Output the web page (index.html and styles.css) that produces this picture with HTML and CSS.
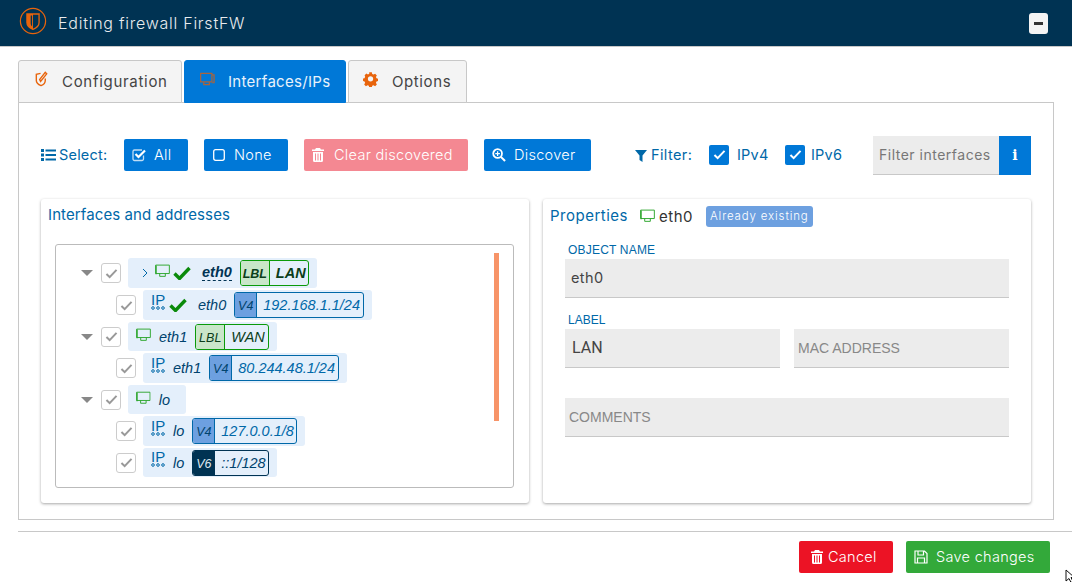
FILE: index.html
```html
<!DOCTYPE html>
<html lang="en">
<head>
  <meta charset="UTF-8">
  <title>Editing firewall FirstFW</title>
  <link rel="stylesheet" href="styles.css">
</head>
<body>
  <svg class="defs" width="0" height="0">
    <symbol id="i-check" viewBox="0 0 18 14"><path d="M1.500 7.500 6.500 12.500 16.500 2" fill="none" stroke="currentColor" stroke-width="3.400"/></symbol>
    <symbol id="i-monitor" viewBox="0 0 16 14"><path d="M.7.7h14.600v9H.7z M5 9.700v3h6v-3" fill="none" stroke="currentColor" stroke-width="1"/><path d="M.5 1v9.500h1.300V1z" fill="currentColor"/></symbol>
    <symbol id="i-trash" viewBox="0 0 12 14"><path d="M4 0h4l1 1.500h3v1.500H0V1.500h3zM1 4h10v8.500a1.500 1.500 0 0 1-1.500 1.500h-7A1.500 1.500 0 0 1 1 12.500zm2 1.500v7h1v-7zm2.500 0v7h1v-7zm2.500 0v7h1v-7z" fill="currentColor" fill-rule="evenodd"/></symbol>
    <symbol id="i-tick" viewBox="0 0 14 12"><path d="M1.500 6.500 5 10 12.500 2" fill="none" stroke="currentColor" stroke-width="2.200"/></symbol>
  </svg>

  <header class="title-bar">
    <svg class="logo" viewBox="0 0 30 30">
      <circle cx="15" cy="15" r="13.500" fill="none" stroke="#e8640c" stroke-width="1.300"/>
      <path d="M8.500 7.500h13v9c0 3.500-3 6-6.500 7.500-3.500-1.500-6.500-4-6.500-7.500z" fill="none" stroke="#e8640c" stroke-width="1.400"/>
      <path d="M8.500 7.500h6.500v16.500c-3.500-1.500-6.500-4-6.500-7.500z" fill="#e8640c"/>
      <path d="M12.500 9h1.500v12c-1-.8-1.500-2-1.500-4z" fill="#003353"/>
    </svg>
    <h1>Editing firewall FirstFW</h1>
    <button class="min-btn"><span></span></button>
  </header>

  <main class="content">
    <nav class="tabs">
      <a class="tab tab-conf">
        <svg class="tab-icon" viewBox="0 0 14 17"><path d="M11 8v2c0 2.500-2 4.500-4.500 5.500C4 14.500 1.500 12.500 1.500 10V3.500L6 2.500M5 9l1 2 6.500-8-1.500-1.500z" fill="none" stroke="#e8640c" stroke-width="1.500"/></svg>
        Configuration
      </a>
      <a class="tab tab-active">
        <svg class="tab-icon" viewBox="0 0 16 15"><path d="M.7 1.500h12v9H.7zM13 3h2v8.500h-2M4 11v2.500h6V11" fill="none" stroke="#a8643c" stroke-width="1.300"/></svg>
        Interfaces/IPs
      </a>
      <a class="tab tab-opts">
        <svg class="tab-icon" viewBox="0 0 16 16"><path d="M6.500.500h3l.4 2 1.500.7 1.800-1.100 2 2-1.100 1.800.7 1.500 1.700.4v2.800l-1.700.4-.7 1.500 1.100 1.800-2 2-1.800-1.100-1.500.7-.4 1.700h-3l-.4-1.700-1.500-.7-1.800 1.100-2-2 1.100-1.800-.7-1.500-1.700-.4V7.600l1.700-.4.700-1.500L1.300 3.900l2-2 1.800 1.100 1.500-.7zM8 5a3 3 0 1 0 0 6 3 3 0 0 0 0-6z" fill="#e8640c" fill-rule="evenodd" transform="translate(.5 .3) scale(.94)"/></svg>
        Options
      </a>
    </nav>

    <section class="panel">
      <div class="toolbar">
        <span class="tool-label label-select">
          <svg class="list-icon" viewBox="0 0 15 12"><path d="M0 0h3v3H0zM4.500.500H15v2H4.500zM0 4.500h3v3H0zM4.500 5H15v2H4.500zM0 9h3v3H0zM4.500 9.500H15v2H4.500z" fill="currentColor"/></svg>
          Select:
        </span>
        <button class="btn btn-blue btn-all">
          <svg class="btn-icon" viewBox="0 0 14 14"><path d="M11.500 7.500v3.500a1.500 1.500 0 0 1-1.500 1.500H2.500A1.500 1.500 0 0 1 1 11V3.500A1.500 1.500 0 0 1 2.500 2h7.500" fill="none" stroke="#fff" stroke-width="1.300" opacity=".75"/><path d="M3.500 6 6.500 9 13 2.500" fill="none" stroke="#fff" stroke-width="2.200"/></svg>
          All
        </button>
        <button class="btn btn-blue btn-none">
          <svg class="btn-icon" viewBox="0 0 14 14"><rect x="1.700" y="1.700" width="10.600" height="10.600" rx="2" fill="none" stroke="#fff" stroke-width="1.300"/></svg>
          None
        </button>
        <button class="btn btn-clear">
          <svg class="btn-icon trash-small"><use href="#i-trash"/></svg>
          Clear discovered
        </button>
        <button class="btn btn-blue btn-discover">
          <svg class="btn-icon" viewBox="0 0 15 15"><circle cx="6" cy="6" r="4.700" fill="none" stroke="#fff" stroke-width="1.900"/><path d="M9.500 9.500 14 14" stroke="#fff" stroke-width="2.200"/><path d="M3.500 6h5M6 3.500v5" stroke="#fff" stroke-width="1.300"/></svg>
          Discover
        </button>
        <span class="tool-label label-filter">
          <svg class="filter-icon" viewBox="0 0 12 12"><path d="M0 0h12L7.500 5.500V12L4.500 10V5.500z" fill="currentColor"/></svg>
          Filter:
        </span>
        <label class="check-wrap check-v4"><span class="check-box"><svg class="check-tick"><use href="#i-tick"/></svg></span>IPv4</label>
        <label class="check-wrap check-v6"><span class="check-box"><svg class="check-tick"><use href="#i-tick"/></svg></span>IPv6</label>
        <div class="filter-input">
          <span class="filter-text">Filter interfaces</span>
          <span class="filter-info">i</span>
        </div>
      </div>

      <div class="cards">
        <section class="card">
          <h2 class="card-title">Interfaces and addresses</h2>
          <div class="tree">
            <div class="tree-row row-h30">
              <span class="caret"></span><span class="tree-check"><svg class="tree-tick"><use href="#i-tick"/></svg></span>
              <div class="pill pill-eth0">
                <svg class="chev" viewBox="0 0 6 10"><path d="M1 1l4 4-4 4" fill="none" stroke="#0068a8" stroke-width="1"/></svg>
                <svg class="monitor mon-tight"><use href="#i-monitor"/></svg>
                <svg class="ok-tick"><use href="#i-check"/></svg>
                <span class="name name-sel">eth0</span>
                <span class="tag tag-green tag-bold"><span class="tag-key">LBL</span><span class="tag-val">LAN</span></span>
              </div>
            </div>
            <div class="tree-row row-child row-h30">
              <span class="tree-check"><svg class="tree-tick"><use href="#i-tick"/></svg></span>
              <div class="pill pill-ip">
                <span class="ip-icon"><span class="ip-text">IP</span><svg class="ip-dots" viewBox="0 0 14 4"><circle cx="2" cy="2" r="1.300"/><circle cx="7" cy="2" r="1.300"/><circle cx="12" cy="2" r="1.300"/></svg></span>
                <svg class="ok-tick ok-ip"><use href="#i-check"/></svg>
                <span class="name">eth0</span>
                <span class="tag tag-blue"><span class="tag-key">V4</span><span class="tag-val">192.168.1.1/24</span></span>
              </div>
            </div>
            <div class="tree-row row-h29">
              <span class="caret"></span><span class="tree-check"><svg class="tree-tick"><use href="#i-tick"/></svg></span>
              <div class="pill pill-if">
                <svg class="monitor"><use href="#i-monitor"/></svg>
                <span class="name">eth1</span>
                <span class="tag tag-green"><span class="tag-key">LBL</span><span class="tag-val">WAN</span></span>
              </div>
            </div>
            <div class="tree-row row-child row-h30">
              <span class="tree-check"><svg class="tree-tick"><use href="#i-tick"/></svg></span>
              <div class="pill pill-ip">
                <span class="ip-icon"><span class="ip-text">IP</span><svg class="ip-dots" viewBox="0 0 14 4"><circle cx="2" cy="2" r="1.300"/><circle cx="7" cy="2" r="1.300"/><circle cx="12" cy="2" r="1.300"/></svg></span>
                <span class="name">eth1</span>
                <span class="tag tag-blue"><span class="tag-key">V4</span><span class="tag-val">80.244.48.1/24</span></span>
              </div>
            </div>
            <div class="tree-row row-h29">
              <span class="caret"></span><span class="tree-check"><svg class="tree-tick"><use href="#i-tick"/></svg></span>
              <div class="pill pill-if pill-lo">
                <svg class="monitor"><use href="#i-monitor"/></svg>
                <span class="name">lo</span>
              </div>
            </div>
            <div class="tree-row row-child row-h30">
              <span class="tree-check"><svg class="tree-tick"><use href="#i-tick"/></svg></span>
              <div class="pill pill-ip">
                <span class="ip-icon"><span class="ip-text">IP</span><svg class="ip-dots" viewBox="0 0 14 4"><circle cx="2" cy="2" r="1.300"/><circle cx="7" cy="2" r="1.300"/><circle cx="12" cy="2" r="1.300"/></svg></span>
                <span class="name">lo</span>
                <span class="tag tag-blue"><span class="tag-key">V4</span><span class="tag-val">127.0.0.1/8</span></span>
              </div>
            </div>
            <div class="tree-row row-child row-h29">
              <span class="tree-check"><svg class="tree-tick"><use href="#i-tick"/></svg></span>
              <div class="pill pill-ip">
                <span class="ip-icon"><span class="ip-text">IP</span><svg class="ip-dots" viewBox="0 0 14 4"><circle cx="2" cy="2" r="1.300"/><circle cx="7" cy="2" r="1.300"/><circle cx="12" cy="2" r="1.300"/></svg></span>
                <span class="name">lo</span>
                <span class="tag tag-dark"><span class="tag-key">V6</span><span class="tag-val">::1/128</span></span>
              </div>
            </div>
            <div class="tree-scroll"></div>
          </div>
        </section>

        <section class="card card-props">
          <div class="props-head">
            <h2 class="card-title">Properties</h2>
            <svg class="monitor props-mon"><use href="#i-monitor"/></svg>
            <span class="props-name">eth0</span>
            <span class="badge">Already existing</span>
          </div>
          <div class="form">
            <label class="field-label">OBJECT NAME</label>
            <div class="field field-value">eth0</div>
            <label class="field-label label-second">LABEL</label>
            <div class="field-pair">
              <div class="field field-value field-lan">LAN</div>
              <div class="field field-hint">MAC ADDRESS</div>
            </div>
            <div class="field field-hint field-comments">COMMENTS</div>
          </div>
        </section>
      </div>
    </section>
  </main>

  <footer class="footer">
    <button class="btn btn-cancel">
      <svg class="btn-icon trash-small"><use href="#i-trash"/></svg>
      Cancel
    </button>
    <button class="btn btn-save">
      <svg class="btn-icon" viewBox="0 0 14 14"><path d="M1 1h9.500L13 3.500V13H1zM4 1.500v3.500h5.500V1.500M3.500 13V8h7v5" fill="none" stroke="#fff" stroke-width="1.200"/></svg>
      Save changes
    </button>
  </footer>

  <svg class="cursor" viewBox="0 0 10 14"><path d="M1 1v11l3-2.500 2 4 2-1-2-4h3.500z" fill="#fff" stroke="#111" stroke-width="1"/></svg>
</body>
</html>
```

FILE: styles.css
```css
* {
  box-sizing: border-box;
}

html, body {
  margin: 0;
  height: 582px;
  overflow: hidden;
}

body {
  position: relative;
  font-family: Inter, "Open Sans", sans-serif;
  font-size: 14px;
  background-color: #fff;
  color: #333;
}

button {
  font-family: inherit;
  border: 0;
}

.defs {
  position: absolute;
}

.title-bar {
  display: flex;
  align-items: center;
  height: 47px;
  padding: 0 24px 1px 19px;
  background-color: #003353;
  border-bottom: 1px solid #c8c8c8;
}

.logo {
  width: 28px;
  height: 28px;
  margin-top: -3px;
}

.title-bar h1 {
  margin: 0 0 0 11px;
  font-size: 16px;
  font-weight: 300;
  letter-spacing: 0.75px;
  color: #e8ebee;
}

.min-btn {
  display: flex;
  align-items: center;
  justify-content: center;
  width: 19px;
  height: 21px;
  margin-left: auto;
  margin-top: 1px;
  padding: 0;
  border-radius: 3px;
  background-color: #f4f4f4;
}

.min-btn span {
  width: 9px;
  height: 3px;
  background-color: #333;
}

.content {
  padding: 13px 18px 0;
}

.tabs {
  display: flex;
  gap: 2px;
  height: 43px;
}

.tab {
  display: flex;
  align-items: center;
  height: 43px;
  padding-bottom: 1px;
  background-color: #f4f4f4;
  border: 1px solid #c8c8c8;
  border-radius: 3px 3px 0 0;
  font-size: 15px;
  color: #444;
}

.tab-conf {
  width: 164px;
  padding-left: 15px;
  letter-spacing: 0.7px;
}

.tab-active {
  width: 162px;
  padding-left: 15px;
  background-color: #0078d7;
  border-color: #0078d7;
  color: #e8f2fb;
  letter-spacing: 0.3px;
}

.tab-opts {
  width: 119px;
  padding-left: 14px;
  letter-spacing: 0.6px;
}

.tab-icon {
  width: 15px;
  height: 16px;
  margin-right: 13px;
  margin-top: -4px;
}

.tab-opts .tab-icon {
  margin-right: 14px;
}

.panel {
  height: 418px;
  margin-top: -1px;
  padding: 33px 22px 0;
  border: 1px solid #c8c8c8;
  background-color: #fff;
}

.toolbar {
  display: flex;
  align-items: center;
  height: 39px;
  color: #0068a8;
}

.toolbar .btn {
  margin-bottom: 1px;
}

.toolbar .tool-label,
.toolbar .check-wrap {
  margin-bottom: 2px;
}

.tool-label {
  display: flex;
  align-items: center;
  font-size: 14.500px;
}

.label-select {
  width: 83px;
  letter-spacing: 0.2px;
}

.list-icon {
  width: 15px;
  height: 12px;
  margin-right: 3px;
}

.filter-icon {
  width: 12px;
  height: 12px;
  margin-right: 4px;
  margin-top: 2px;
}

.btn {
  display: flex;
  align-items: center;
  height: 32px;
  padding: 0 0 1px 8px;
  border-radius: 2px;
  font-size: 14.500px;
  font-weight: 300;
  letter-spacing: 0.3px;
  color: #fff;
}

.btn-blue {
  background-color: #0078d7;
}

.btn-icon {
  width: 14px;
  height: 14px;
  margin-right: 8px;
  flex: none;
}

.trash-small {
  width: 12px;
}

.btn-all {
  width: 64px;
}

.btn-none {
  width: 84px;
  margin-left: 16px;
}

.btn-clear {
  width: 164px;
  margin-left: 16px;
  background-color: #f48892;
}

.btn-clear .btn-icon {
  margin-right: 10px;
}

.btn-discover {
  width: 107px;
  margin-left: 16px;
}

.label-filter {
  width: 74px;
  margin-left: 44px;
  letter-spacing: 0.4px;
}

.check-wrap {
  display: flex;
  align-items: center;
  font-size: 14.500px;
  letter-spacing: 0.2px;
}

.check-box {
  display: flex;
  align-items: center;
  justify-content: center;
  width: 20px;
  height: 20px;
  margin-right: 8px;
  border-radius: 2px;
  background-color: #0078d7;
  color: #fff;
}

.check-tick {
  width: 13px;
  height: 11px;
}

.check-v4 {
  width: 76px;
}

.check-v6 {
  width: 88px;
}

.check-v6 .check-box {
  margin-right: 6px;
}

.filter-input {
  display: flex;
  width: 158px;
  height: 39px;
}

.filter-text {
  display: flex;
  align-items: center;
  width: 126px;
  padding: 0 0 2px 6px;
  background-color: #ececec;
  border-bottom: 1px solid #c8c8c8;
  font-size: 14px;
  letter-spacing: 0.5px;
  color: #777;
  white-space: nowrap;
}

.filter-info {
  display: flex;
  align-items: center;
  justify-content: center;
  width: 32px;
  padding-bottom: 2px;
  background-color: #0078d7;
  color: #fff;
  font-family: "DejaVu Serif", serif;
  font-weight: 700;
  font-size: 14px;
}

.cards {
  display: flex;
  gap: 14px;
  margin-top: 24px;
}

.card {
  width: 488px;
  height: 304px;
  padding: 7px 7px 0;
  border-radius: 3px;
  background-color: #fff;
  box-shadow: 0 1px 3px rgba(0, 0, 0, 0.35);
}

.card-title {
  margin: 0;
  font-size: 15px;
  font-weight: 400;
  line-height: 18px;
  letter-spacing: 0.1px;
  color: #0068a8;
}

.tree {
  position: relative;
  display: flex;
  flex-direction: column;
  gap: 2px;
  width: 459px;
  height: 244px;
  margin: 20px 0 0 7px;
  padding: 13px 0 0 25px;
  border: 1px solid #bbb;
  border-radius: 3px;
}

.tree-row {
  display: flex;
  align-items: center;
}

.row-h30 {
  height: 30px;
}

.row-h29 {
  height: 29px;
}

.row-child {
  padding-left: 35px;
}

.caret {
  width: 0;
  height: 0;
  margin-right: 8px;
  border-left: 6px solid transparent;
  border-right: 6px solid transparent;
  border-top: 6px solid #888;
}

.tree-check {
  display: flex;
  align-items: center;
  justify-content: center;
  width: 20px;
  height: 20px;
  margin-right: 7px;
  background-color: #fff;
  border: 1px solid #ccc;
  border-radius: 3px;
  color: #999;
}

.tree-tick {
  width: 13px;
  height: 11px;
}

.pill {
  display: flex;
  align-items: center;
  height: 100%;
  padding-right: 8px;
  border-radius: 3px;
  background-color: #e4effb;
  font-family: "Liberation Sans", Arial, sans-serif;
  font-size: 14.500px;
  font-style: italic;
  color: #00436e;
}

.pill-if {
  padding-left: 8px;
}

.pill-ip {
  padding-left: 8px;
}

.pill-eth0 {
  padding-left: 14px;
}

.pill-lo {
  width: 58px;
}

.chev {
  width: 6px;
  height: 10px;
  margin-right: 7px;
}

.monitor {
  width: 15px;
  height: 14px;
  margin-top: -4px;
  color: #2ba52b;
}

.pill-if .monitor {
  margin-right: 8px;
}

.mon-tight {
  margin-right: 3px;
}

.ok-tick {
  width: 18px;
  height: 14px;
  margin-right: 11px;
  color: #0a8a0a;
}

.ok-ip {
  margin-left: -4px;
}

.ip-icon {
  display: flex;
  flex-direction: column;
  width: 14px;
  margin-right: 8px;
  margin-top: -6px;
  font-style: normal;
  font-size: 15px;
  color: #0068a8;
}

.ip-text {
  height: 10px;
  line-height: 10px;
}

.ip-dots {
  width: 14px;
  height: 4px;
  margin-top: 1px;
  fill: none;
  stroke: #0068a8;
  stroke-width: 1;
}

.name {
  margin-right: 8px;
}

.name-sel {
  font-weight: 700;
  border-bottom: 1px dashed #003353;
  line-height: 15px;
  color: #003353;
}

.tag {
  display: flex;
  align-items: stretch;
  height: 26px;
  border: 1px solid;
  border-radius: 3px;
  overflow: hidden;
}

.tag-key {
  display: flex;
  align-items: center;
  justify-content: center;
  font-size: 12.500px;
  padding-top: 2px;
  border-right: 1px solid;
}

.tag-val {
  display: flex;
  align-items: center;
  padding: 0 2.500px 0 6px;
}

.tag-green {
  border-color: #0a9a0a;
  color: #0b3d1a;
}

.tag-green .tag-key {
  width: 29px;
  background-color: #c9e6c9;
  border-color: #0a9a0a;
}

.tag-green .tag-val {
  padding: 0 3px 0 6px;
}

.tag-bold .tag-val {
  padding-right: 2px;
}

.tag-bold .tag-key,
.tag-bold .tag-val {
  font-weight: 700;
}

.tag-blue {
  border-color: #0068a8;
  color: #0068a8;
}

.tag-blue .tag-key {
  width: 22px;
  background-color: #6da0e0;
  border-color: #0068a8;
  color: #00436e;
}

.tag-dark {
  border-color: #003353;
  color: #00436e;
}

.tag-dark .tag-key {
  width: 22px;
  background-color: #003353;
  border-color: #003353;
  color: #dfe8f0;
}

.tree-scroll {
  position: absolute;
  top: 8px;
  left: 438px;
  width: 5px;
  height: 168px;
  background-color: #f79468;
}

.card-props {
  padding-top: 6px;
}

.props-head {
  display: flex;
  align-items: center;
  height: 22px;
}

.props-head .card-title {
  letter-spacing: 0.5px;
}

.props-mon {
  margin: 0 4px 0 12px;
}

.props-name {
  font-size: 15px;
  letter-spacing: 0.5px;
  color: #333;
}

.badge {
  margin-left: 13px;
  padding: 3px 4px;
  border-radius: 3px;
  background-color: #6da0e0;
  font-size: 11.500px;
  font-weight: 300;
  line-height: 15px;
  letter-spacing: 0.85px;
  color: #fff;
}

.form {
  padding: 16px 15px 0;
  font-family: "Liberation Sans", Arial, sans-serif;
}

.field-label {
  display: block;
  height: 16px;
  padding-left: 3px;
  font-size: 12px;
  line-height: 15px;
  letter-spacing: 0.2px;
  color: #0068a8;
}

.label-second {
  margin-top: 15px;
  letter-spacing: 0;
}

.field {
  display: flex;
  align-items: center;
  height: 39px;
  background-color: #ececec;
  border-bottom: 1px solid #c8c8c8;
}

.field-value {
  padding: 0 0 2px 6px;
  font-family: Inter, sans-serif;
  font-size: 14.500px;
  letter-spacing: 0.4px;
  color: #444;
}

.field-lan {
  padding-left: 7px;
  font-family: Roboto, sans-serif;
  font-size: 16px;
  letter-spacing: 0;
}

.field-hint {
  padding-left: 4px;
  font-size: 14px;
  color: #888;
}

.field-pair {
  display: flex;
  gap: 14px;
}

.field-pair .field {
  width: 215px;
}

.field-comments {
  margin-top: 30px;
}

.footer {
  display: flex;
  justify-content: flex-end;
  gap: 13px;
  height: 51px;
  margin: 11px 0 0 18px;
  padding: 9px 22px 0 0;
  border-top: 1px solid #c8c8c8;
}

.btn-cancel {
  width: 94px;
  padding-left: 12px;
  background-color: #ec1325;
}

.btn-cancel .btn-icon {
  margin-right: 5px;
}

.btn-save {
  width: 144px;
  background-color: #33a93a;
}

.cursor {
  position: absolute;
  left: 1065px;
  top: 569px;
  width: 10px;
  height: 14px;
}
```
